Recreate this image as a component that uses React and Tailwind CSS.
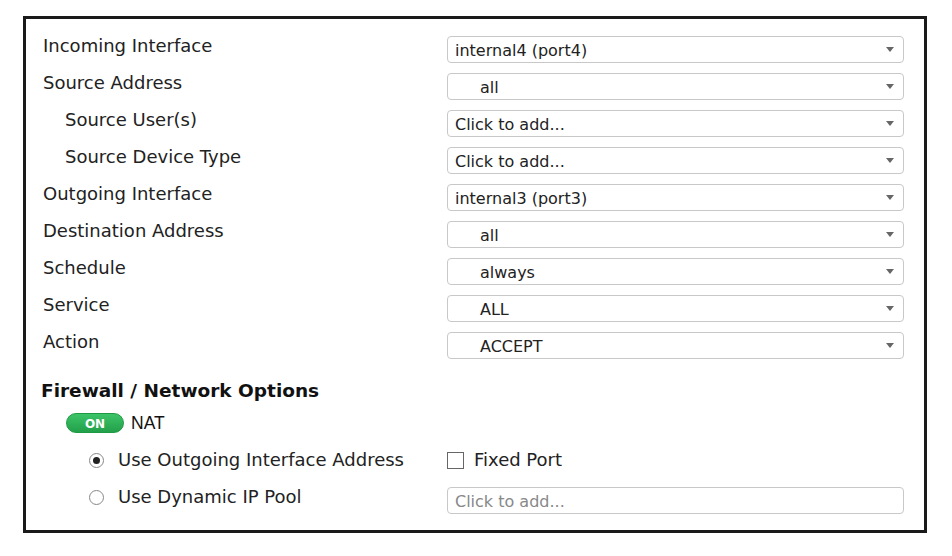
import React from 'react'

const rows = [
  { label: 'Incoming Interface', value: 'internal4 (port4)' },
  { label: 'Source Address', value: 'all', padded: true },
  { label: 'Source User(s)', value: 'Click to add...', sub: true },
  { label: 'Source Device Type', value: 'Click to add...', sub: true },
  { label: 'Outgoing Interface', value: 'internal3 (port3)' },
  { label: 'Destination Address', value: 'all', padded: true },
  { label: 'Schedule', value: 'always', padded: true },
  { label: 'Service', value: 'ALL', padded: true },
  { label: 'Action', value: 'ACCEPT', padded: true },
]

function Select({ value, padded }) {
  return (
    <div className="flex h-[27px] w-[457px] items-center rounded-[4px] border border-[#c8c8c8] bg-white pr-[9px]">
      <span className={`flex-1 pt-[2px] text-[16px] text-[#222] ${padded ? 'pl-[32px]' : 'pl-[7px]'}`}>{value}</span>
      <span className="h-0 w-0 border-x-[4.5px] border-t-[5px] border-x-transparent border-t-[#666]" />
    </div>
  )
}

function Radio({ checked }) {
  return (
    <span className="flex h-[15px] w-[15px] items-center justify-center rounded-full border border-[#888] bg-white">
      {checked && <span className="h-[7px] w-[7px] rounded-full bg-[#222]" />}
    </span>
  )
}

export default function App() {
  return (
    <div className="h-[556px] w-[952px] bg-white pl-[23px] pt-[16px]" style={{ fontFamily: '"DejaVu Sans", Verdana, sans-serif' }}>
      <div className="h-[517px] w-[904px] border-[3px] border-[#1a1a1a] pl-[17px] pt-[17px]">
        <div className="flex flex-col gap-[10px]">
          {rows.map(r => (
            <div key={r.label} className="flex items-start">
              <div className={`h-[20px] w-[404px] text-[18px] leading-[20px] text-[#222] ${r.sub ? 'pl-[22px]' : ''}`}>{r.label}</div>
              <Select value={r.value} padded={r.padded} />
            </div>
          ))}
        </div>

        <div className="-ml-[2px] mt-[22px] h-[20px] text-[18.5px] font-bold leading-[20px] text-[#111]">
          Firewall / Network Options
        </div>

        <div className="mt-[12px] flex h-[20px] items-center pl-[23px]">
          <span className="flex h-[20px] w-[58px] items-center justify-center rounded-full border border-[#1f9a44] bg-gradient-to-b from-[#3cc468] to-[#22a04a] pt-[1px] text-[12px] font-bold text-white">
            ON
          </span>
          <span className="ml-[7px] text-[17.5px] text-[#111]" style={{ fontFamily: '"Liberation Sans", Arial, sans-serif' }}>NAT</span>
        </div>

        <div className="mt-[17px] flex h-[20px] items-center">
          <div className="flex w-[404px] items-center pl-[46px]">
            <Radio checked />
            <span className="ml-[14px] text-[18px] leading-[20px] text-[#222]">Use Outgoing Interface Address</span>
          </div>
          <span className="h-[17px] w-[17px] border border-[#666] bg-white" />
          <span className="ml-[10px] text-[18px] leading-[20px] text-[#222]">Fixed Port</span>
        </div>

        <div className="mt-[17px] flex items-start">
          <div className="flex h-[20px] w-[404px] items-center pl-[46px]">
            <Radio />
            <span className="ml-[14px] text-[18px] leading-[20px] text-[#222]">Use Dynamic IP Pool</span>
          </div>
          <div className="flex h-[27px] w-[457px] items-center rounded-[4px] border border-[#c8c8c8] bg-white pl-[7px] pt-[2px] text-[16px] text-[#888]">
            Click to add...
          </div>
        </div>
      </div>
    </div>
  )
}
